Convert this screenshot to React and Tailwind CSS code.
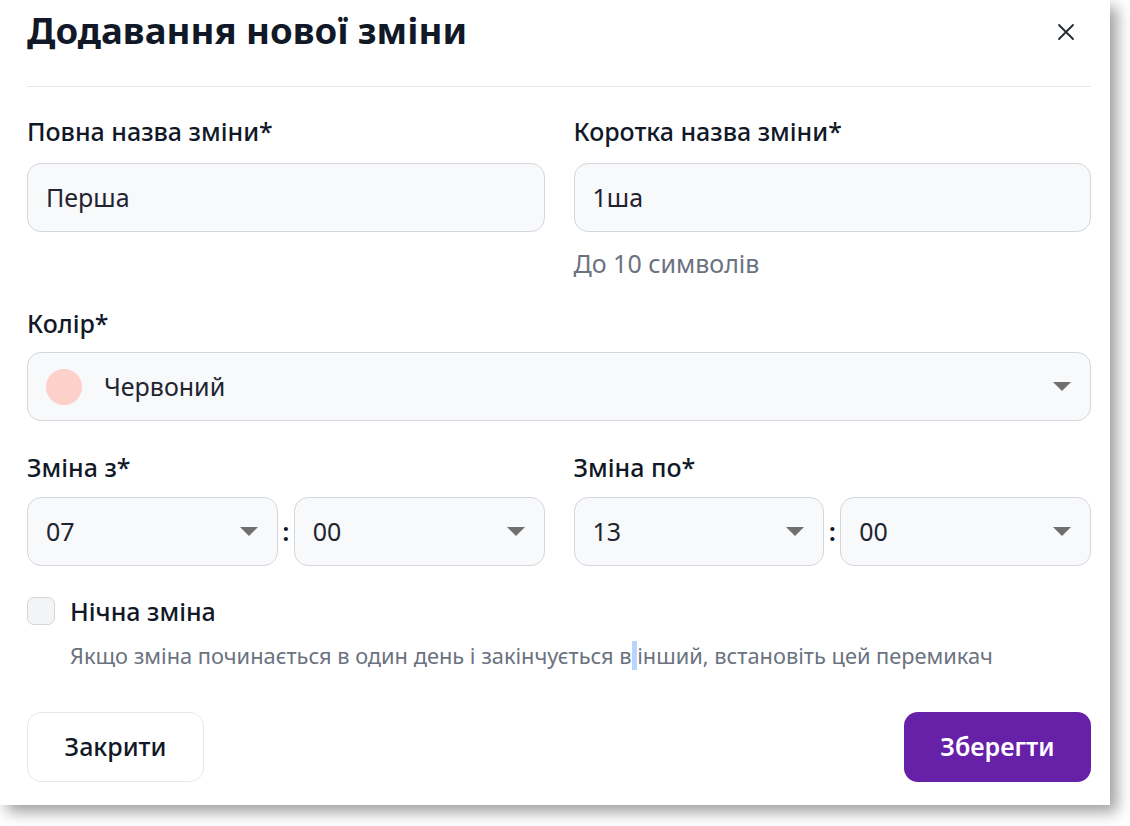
import { useState } from "react";

function Caret() {
  return (
    <svg width="18" height="9" viewBox="0 0 18 9" className="shrink-0">
      <path d="M0 0 L18 0 L9 9 Z" fill="#6f6f6f" />
    </svg>
  );
}

function SelectBox({ value, children }) {
  return (
    <div className="flex h-[69px] w-full items-center justify-between rounded-[14px] border border-[#d4d6dc] bg-[#f8f9fb] pl-[18px] pr-[19px]">
      <div className="flex items-center">
        {children}
        <span className="text-[25px] text-[#1f2430]">{value}</span>
      </div>
      <Caret />
    </div>
  );
}

function TimePair({ hour, minute }) {
  return (
    <div className="flex items-center">
      <SelectBox value={hour} />
      <span className="w-[16px] shrink-0 text-center text-[26px] font-semibold text-[#111827]">:</span>
      <SelectBox value={minute} />
    </div>
  );
}

export default function App() {
  const [night, setNight] = useState(false);

  return (
    <div className="min-h-screen bg-white" style={{ fontFamily: '"Noto Sans", "Open Sans", sans-serif' }}>
      <div className="flex h-[805px] w-[1110px] flex-col bg-white pl-[27px] pr-[19px] shadow-[7px_7px_14px_rgba(0,0,0,0.38)]">
        <div className="flex h-[87px] items-start justify-between border-b border-[#e5e7eb] pt-[6px]">
          <h1 className="text-[36.6px] font-bold leading-[48px] text-[#111827]">Додавання нової зміни</h1>
          <button className="mr-[16px] mt-[17px] text-[#1f2937]">
            <svg width="18" height="18" viewBox="0 0 18 18" fill="none" stroke="currentColor" strokeWidth="1.8" strokeLinecap="round">
              <path d="M2 2 L16 16 M16 2 L2 16" />
            </svg>
          </button>
        </div>

        <div className="mt-[28px] grid grid-cols-2 gap-x-[29px]">
          <div>
            <label className="block text-[25px] font-medium leading-[32px] text-[#111827]">Повна назва зміни*</label>
            <div className="mt-[16px] flex h-[69px] items-center rounded-[14px] border border-[#d4d6dc] bg-[#f8f9fb] px-[18px] text-[25px] text-[#1f2430]">
              Перша
            </div>
          </div>
          <div>
            <label className="block text-[25px] font-medium leading-[32px] text-[#111827]">Коротка назва зміни*</label>
            <div className="mt-[16px] flex h-[69px] items-center rounded-[14px] border border-[#d4d6dc] bg-[#f8f9fb] px-[18px] text-[25px] text-[#1f2430]">
              1ша
            </div>
            <p className="mt-[15px] text-[25px] leading-[32px] text-[#6b7280]">До 10 символів</p>
          </div>
        </div>

        <div className="mt-[28px]">
          <label className="block text-[25px] font-medium leading-[32px] text-[#111827]">Колір*</label>
          <div className="mt-[13px]">
            <SelectBox value="Червоний">
              <span className="mr-[22px] h-[36px] w-[36px] rounded-full bg-[#fdd0c9]" />
            </SelectBox>
          </div>
        </div>

        <div className="mt-[30px] grid grid-cols-2 gap-x-[29px]">
          <div>
            <label className="block text-[25px] font-medium leading-[32px] text-[#111827]">Зміна з*</label>
            <div className="mt-[14px]">
              <TimePair hour="07" minute="00" />
            </div>
          </div>
          <div>
            <label className="block text-[25px] font-medium leading-[32px] text-[#111827]">Зміна по*</label>
            <div className="mt-[14px]">
              <TimePair hour="13" minute="00" />
            </div>
          </div>
        </div>

        <div className="mt-[29px] flex items-center">
          <button
            onClick={() => setNight(!night)}
            className="h-[28px] w-[28px] rounded-[7px] border border-[#d4d6dc] bg-[#f3f4f6]"
          />
          <span className="ml-[15px] text-[25px] font-medium leading-[32px] text-[#111827]">Нічна зміна</span>
        </div>
        <p className="ml-[43px] mt-[14px] text-[21.8px] leading-[30px] text-[#6b7280]">
          Якщо зміна починається в один день і закінчується в<span className="bg-[#b6d6fd]"> </span>інший, встановіть цей перемикач
        </p>

        <div className="mt-[41px] flex items-center justify-between">
          <button className="h-[70px] w-[177px] rounded-[14px] border border-[#e5e7eb] bg-white text-[25px] font-medium text-[#111827]">
            Закрити
          </button>
          <button className="h-[70px] w-[187px] rounded-[14px] bg-[#6720a8] text-[25px] font-semibold text-white">
            Зберегти
          </button>
        </div>
      </div>
    </div>
  );
}
